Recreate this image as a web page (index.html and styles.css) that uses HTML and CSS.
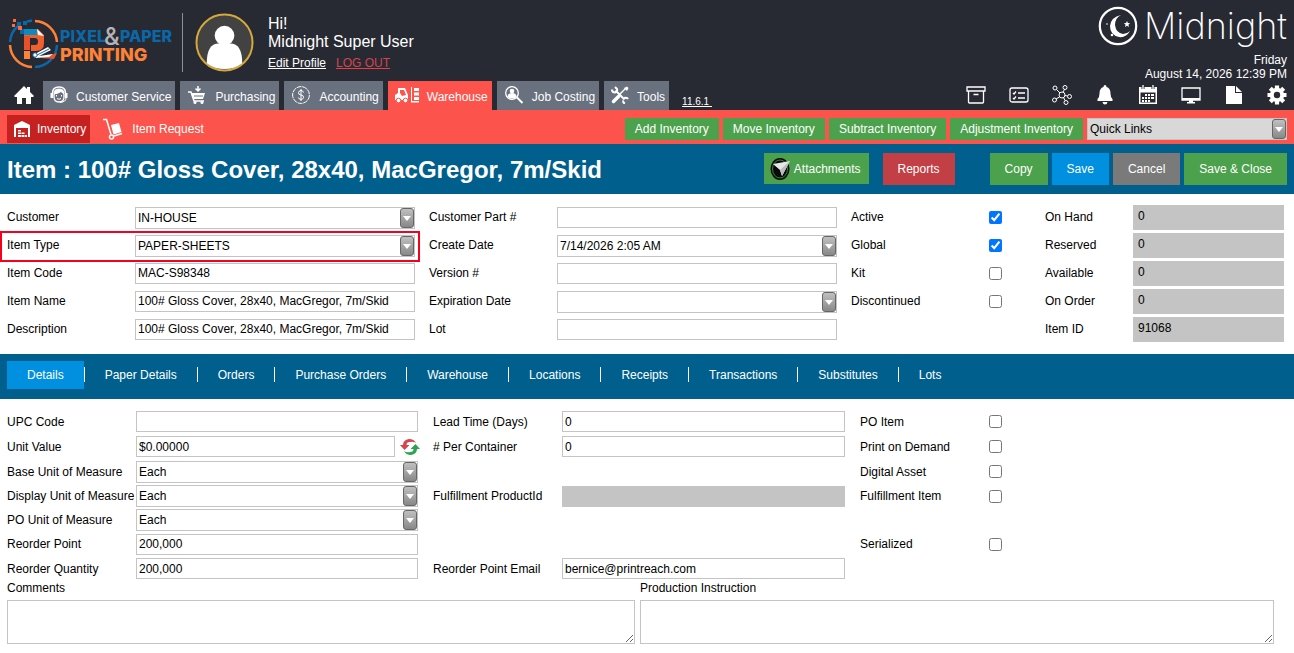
FILE: index.html
```
<!DOCTYPE html>
<html lang="en">
<head>
  <meta charset="UTF-8" />
  <meta name="viewport" content="width=device-width, initial-scale=1.0"/>
  <title>Midnight - Item</title>
  <link rel="stylesheet" href="styles.css">
</head>
<body>

  <!-- Header -->
  <header class="header">
    <div class="header-left">
      <div class="brand">
        <svg class="brand-logo" viewBox="0 0 166 54" role="img" aria-label="Pixel and Paper Printing">
          <g fill="none" stroke-width="2.500">
            <path d="M28 4A23 23 0 0 1 50 25" stroke="#ff8236"/>
            <path d="M50 28A23 23 0 0 1 28 50" stroke="#0a68a8"/>
            <path d="M25 50A23 23 0 0 1 3 28" stroke="#ff8236"/>
            <path d="M3 25A23 23 0 0 1 11 9" stroke="#0a68a8"/>
            <path d="M20 4.500l5-1" stroke="#0a68a8"/>
          </g>
          <path d="M10 5h4v4h-4zM16 4h4v4h-4zM13 12h4v5h-4z" fill="#0a68a8"/>
          <path d="M6 2h3v3h-3zM5 7h3v3h-3zM11 9h4v4h-4z" fill="#ff6a3a"/>
          <path d="M17 12h14l6 6v8q0 8-8 8h-5v-6h4q3 0 3-3.500t-3-3.500h-5v-1h-6z" fill="#f0602e"/>
          <path d="M17 12h13v6h-13z" fill="#0b8bc0"/>
          <path d="M17 19h6v14h-6z" fill="#e8502c"/>
          <path d="M17 34h6v8h-6z" fill="#ff8236"/>
          <path d="M30 12l7 7-6-1z" fill="#fff"/>
          <path d="M34 41l16-5-3 6z" fill="#e8502c"/>
          <path d="M26 38l15-8 3 3-12 6 14-2-4 3-13 1z" fill="#fff"/>
          <path d="M30 38l12-6" stroke="#0a68a8"/>
          <circle cx="28" cy="38" r="2.200" fill="#fff" stroke="#0a68a8"/>
          <g class="logo-words">
            <text x="53" y="25" class="logo-blue">PIXEL</text>
            <text x="113" y="25" class="logo-blue">PAPER</text>
            <text x="97" y="28" class="logo-amp">&amp;</text>
            <text x="53" y="44" class="logo-orange">PRINTING</text>
          </g>
        </svg>
        <div class="divider"></div>
        <svg class="avatar" viewBox="0 0 60 60" aria-hidden="true">
          <circle cx="30" cy="30" r="28.500" fill="#424242" stroke="#d6a93a" stroke-width="2"/>
          <circle cx="30" cy="23" r="10" fill="#fff"/>
          <path d="M12 51q0-20 12-20h12q12 0 12 20-8 6-18 6t-18-6z" fill="#fff"/>
        </svg>
        <div class="user">
          <div class="user-name">Hi!<br>Midnight Super User</div>
          <div class="user-links">
            <a href="#">Edit Profile</a>
            <a href="#" class="logout">LOG OUT</a>
          </div>
        </div>
      </div>

      <nav class="main-nav">
        <a href="#" class="home" aria-label="Home">
          <svg viewBox="0 0 20 18"><path d="M10 0l3 3v-2h3v5l4 4-1 1h-2v7h-5v-6h-4v6h-5v-7h-2l-1-1z" fill="#fff"/></svg>
        </a>
        <a href="#">
          <svg width="18" height="18" viewBox="0 0 18 18" fill="none" stroke="#fff">
            <path d="M2.500 7q0-6 6.500-6t6.500 6" stroke-width="1.500"/>
            <path d="M4 8q-.5-5 5-5t5 5l-3-2.500q-3 2-7 2.500z" fill="#fff"/>
            <path d="M4 8v3q0 5 5 5t5-5v-3" stroke-width="1.300"/>
            <path d="M.500 7h2.500v5h-2.500zM15 7h2.500v5h-2.500z" fill="#fff" stroke="none"/>
            <path d="M16 12q0 4-6 4.500M7 12.500q2 1.500 4 0M6.500 9v1.500M11.500 9v1.500"/>
          </svg>
          Customer Service
        </a>
        <a href="#">
          <svg width="20" height="18" viewBox="0 0 20 18" fill="none" stroke="#fff" stroke-width="1.500">
            <path d="M1 6h3l3 9h10"/>
            <path d="M4 7h14l-2 6h-10z" fill="#fff" stroke="none"/>
            <path d="M7 10h9" stroke="#69717f" stroke-width="1"/>
            <path d="M11 0v4M8.500 2.500l2.500 2.500 2.500-2.500"/>
            <circle cx="8" cy="16.500" r="1.500" fill="#fff" stroke="none"/>
            <circle cx="15" cy="16.500" r="1.500" fill="#fff" stroke="none"/>
          </svg>
          Purchasing
        </a>
        <a href="#">
          <svg width="20" height="18" viewBox="0 0 20 18" fill="none" stroke="#fff">
            <circle cx="10" cy="9" r="8.400" stroke-dasharray="5 .8"/>
            <path d="M12.500 6.500q-.5-2-2.500-2t-2.500 2 2.500 2.500 2.500 2.500-2.500 2-2.500-2M10 3v12"/>
          </svg>
          Accounting
        </a>
        <a href="#" class="active">
          <svg width="24" height="18" viewBox="0 0 24 18">
            <path d="M0 9l3-2v-5h7l3 7v5h-13z" fill="#fff"/>
            <path d="M5 4h4l2 5-4 1-2-3z" fill="#fc544c"/>
            <circle cx="3.500" cy="14.500" r="2.300" fill="#fff" stroke="#fc544c"/>
            <circle cx="10.500" cy="14.500" r="2.300" fill="#fff" stroke="#fc544c"/>
            <path d="M16 1h1v14h7v1.500h-8zM19 2h5v3h-5zM19 6.500h5v3h-5zM19 11h5v3h-5z" fill="#fff"/>
          </svg>
          Warehouse
        </a>
        <a href="#">
          <svg width="20" height="18" viewBox="0 0 20 18" fill="none" stroke="#fff">
            <circle cx="8" cy="7" r="6.300" stroke-width="1.300"/>
            <circle cx="8" cy="5" r="2.300" fill="#fff" stroke="none"/>
            <path d="M3.500 11q0-4 4.500-4t4.500 4q-4 3-9 0z" fill="#fff" stroke="none"/>
            <path d="M13 11.500l5.500 5.500" stroke-width="2"/>
          </svg>
          Job Costing
        </a>
        <a href="#">
          <svg width="18" height="18" viewBox="0 0 18 18" fill="none" stroke="#fff">
            <path d="M4.500 4.500l9 9" stroke-width="2"/>
            <path d="M1 3.500q0 3 3 3 2.500-.5 2-3.500l-2-2M13 12q3-1 4 1M12.500 14.500q-1 2 1.500 3" stroke-width="2"/>
            <path d="M14.500 2.500l-6 6" stroke-width="1.500"/>
            <path d="M13 2l3-1.500 1.500 1.500-1.500 3z" fill="#fff" stroke="none"/>
            <path d="M7.500 10.500l-5 5" stroke-width="3.500" stroke-linecap="round"/>
          </svg>
          Tools
        </a>
        <a href="#" class="version">11.6.1&nbsp;</a>
      </nav>
    </div>

    <div class="header-right">
      <div class="product">
        <svg width="40" height="40" viewBox="0 0 40 40" aria-hidden="true">
          <circle cx="20" cy="20" r="18.200" fill="none" stroke="#fff" stroke-width="2.200"/>
          <path d="M23 9q-6 3-6 10 1 8 8 9 4 0 7-3-4 7-11 6-9-2-9-11 1-9 11-11z" fill="#fff"/>
          <path d="M29 15l.9 2 2.200.2-1.700 1.500.6 2.300-2-1.200-2 1.200.6-2.300-1.700-1.500 2.200-.2z" fill="#fff"/>
          <circle cx="9" cy="18" r=".8" fill="#fff"/>
          <circle cx="14" cy="29" r="1.300" fill="#fff"/>
        </svg>
        <span>Midnight</span>
      </div>
      <div class="date">Friday<br>August 14, 2026 12:39 PM</div>
      <div class="tools">
        <a href="#" aria-label="Archive">
          <svg viewBox="0 0 20 20" fill="none" stroke="#fff" stroke-width="1.300"><path d="M1 2h18v4h-18zM2.500 6v11q0 1 1 1h13q1 0 1-1v-11M7.500 9.500h5"/></svg>
        </a>
        <a href="#" aria-label="Checklist">
          <svg viewBox="0 0 20 20" fill="none" stroke="#fff" stroke-width="1.300"><rect x="1" y="3" width="18" height="14" rx="2"/><path d="M4 8l1 1 2-2.500M4 13l1 1 2-2.500M9 8h7M9 13h7"/></svg>
        </a>
        <a href="#" aria-label="Network">
          <svg viewBox="0 0 20 20" fill="none" stroke="#fff"><circle cx="10" cy="10" r="3"/><circle cx="3" cy="3" r="2"/><circle cx="13" cy="2.500" r="2"/><circle cx="17.500" cy="11.500" r="2"/><circle cx="14" cy="17.500" r="2"/><circle cx="2.500" cy="15" r="2"/><path d="M4.500 4.500l3.500 3.500M12.500 4.500l-1.500 2.500M13 10.500l2.500.5M11.500 12.500l1.500 3M7.500 12l-3.500 2"/></svg>
        </a>
        <a href="#" aria-label="Notifications">
          <svg viewBox="0 0 20 20" fill="#fff"><path d="M10 0q1.500 0 1.500 2 4 1 4 6.500 0 4 2 5.500v2h-15v-2q2-1.500 2-5.500 0-5.500 4-6.500 0-2 1.500-2zM7.500 17h5q-.5 2.500-2.500 2.500t-2.500-2.500z"/></svg>
        </a>
        <a href="#" aria-label="Calendar">
          <svg viewBox="0 0 20 20"><path d="M1 2h18v17h-18z" fill="#fff"/><path d="M2.500 7.500h15v10h-15z" fill="#282a33"/><path d="M7 9h2v2h-2zM10 9h2v2h-2zM13 9h3v2h-3zM4 12h2v2h-2zM7 12h2v2h-2zM10 12h2v2h-2zM13 12h3v2h-3zM4 15h2v2h-2zM7 15h2v2h-2zM10 15h2v2h-2z" fill="#fff"/><path d="M5 0v4M15 0v4" stroke="#282a33" stroke-width="3"/><path d="M5 0v4M15 0v4" stroke="#fff" stroke-width="1.300"/></svg>
        </a>
        <a href="#" aria-label="Monitor">
          <svg viewBox="0 0 20 20"><path d="M1 3h18v12h-18z" fill="none" stroke="#fff" stroke-width="1.300"/><path d="M1 13h18v2h-18zM8 15h4v2h2v1.500h-8v-1.500h2z" fill="#fff"/></svg>
        </a>
        <a href="#" aria-label="Document">
          <svg viewBox="0 0 20 20" fill="#fff"><path d="M2 1h9v7h7v11h-16zM12 1l6 6h-6z"/></svg>
        </a>
        <a href="#" aria-label="Settings">
          <svg viewBox="0 0 20 20"><circle cx="10" cy="10" r="5.200" fill="none" stroke="#fff" stroke-width="4"/><path d="M10 .500v4M10 15.500v4M.500 10h4M15.500 10h4M3.300 3.300l2.700 2.700M14 14l2.700 2.700M3.300 16.700l2.700-2.700M14 6l2.700-2.700" stroke="#fff" stroke-width="4.200"/></svg>
        </a>
      </div>
    </div>
  </header>

  <!-- Warehouse menu -->
  <div class="sub-bar">
    <nav class="sub-nav">
      <a href="#" class="active">
        <svg width="16" height="16" viewBox="0 0 16 16"><path d="M0 4l8-4 8 4v12h-2v-9h-12v9h-2z" fill="#fff"/><path d="M4 9h3v1.500h-3zM4 11.500h3v1.500h-3zM4 14h3v2h-3zM7.500 11.500h3v1.500h-3zM7.500 14h3v2h-3zM11 14h2v2h-2z" fill="#fff"/></svg>
        Inventory
      </a>
      <a href="#" class="plain">
        <svg width="20" height="22" viewBox="0 0 20 22"><path d="M0 1.500h3.500l4.500 15" fill="none" stroke="#fff" stroke-width="1.500"/><path d="M8 7l8-2 2.500 9-8 2.500z" fill="#fff"/><path d="M11 18l8-2.500" stroke="#fff" stroke-width="1.500"/><circle cx="8.500" cy="19" r="2" fill="none" stroke="#fff" stroke-width="1.500"/></svg>
        Item Request
      </a>
    </nav>
    <div class="sub-actions">
      <button>Add Inventory</button>
      <button>Move Inventory</button>
      <button>Subtract Inventory</button>
      <button>Adjustment Inventory</button>
      <div class="combo quick-links">
        <select aria-label="Quick Links"><option>Quick Links</option></select>
      </div>
    </div>
  </div>

  <!-- Title -->
  <div class="title-bar">
    <h1>Item : 100# Gloss Cover, 28x40, MacGregor, 7m/Skid</h1>
    <div class="title-actions">
      <button class="btn attachments">
        <svg width="20" height="24" viewBox="0 0 20 24" aria-hidden="true"><ellipse cx="10" cy="12" rx="9.500" ry="11" fill="#0a0a0a"/><ellipse cx="10" cy="12" rx="7.500" ry="9" fill="none" stroke="#4ca14c" stroke-width=".8"/><path d="M3 7l17-3-8 15-2-6z" fill="#e6e6e6"/><path d="M10 13l10-9-8 15z" fill="#bbb"/></svg>
        Attachments
      </button>
      <button class="btn red">Reports</button>
      <div class="save-group">
        <button class="btn">Copy</button>
        <button class="btn blue">Save</button>
        <button class="btn gray">Cancel</button>
        <button class="btn">Save &amp; Close</button>
      </div>
    </div>
  </div>

  <!-- Item form -->
  <form class="item-form">
    <div class="col">
      <div class="row">
        <label for="customer">Customer</label>
        <div class="combo"><select id="customer"><option>IN-HOUSE</option></select></div>
      </div>
      <div class="row highlight">
        <label for="item-type">Item Type</label>
        <div class="combo"><select id="item-type"><option>PAPER-SHEETS</option></select></div>
      </div>
      <div class="row">
        <label for="item-code">Item Code</label>
        <input type="text" id="item-code" value="MAC-S98348">
      </div>
      <div class="row">
        <label for="item-name">Item Name</label>
        <input type="text" id="item-name" value="100# Gloss Cover, 28x40, MacGregor, 7m/Skid">
      </div>
      <div class="row">
        <label for="description">Description</label>
        <input type="text" id="description" value="100# Gloss Cover, 28x40, MacGregor, 7m/Skid">
      </div>
    </div>

    <div class="col">
      <div class="row">
        <label for="customer-part">Customer Part #</label>
        <input type="text" id="customer-part">
      </div>
      <div class="row">
        <label for="create-date">Create Date</label>
        <div class="combo"><input type="text" id="create-date" value="7/14/2026 2:05 AM"></div>
      </div>
      <div class="row">
        <label for="version">Version #</label>
        <input type="text" id="version">
      </div>
      <div class="row">
        <label for="expiration-date">Expiration Date</label>
        <div class="combo"><input type="text" id="expiration-date"></div>
      </div>
      <div class="row">
        <label for="lot">Lot</label>
        <input type="text" id="lot">
      </div>
    </div>

    <div class="col checks">
      <div class="row"><label for="active">Active</label><input type="checkbox" id="active" checked></div>
      <div class="row"><label for="global">Global</label><input type="checkbox" id="global" checked></div>
      <div class="row"><label for="kit">Kit</label><input type="checkbox" id="kit"></div>
      <div class="row"><label for="discontinued">Discontinued</label><input type="checkbox" id="discontinued"></div>
    </div>

    <div class="col totals">
      <div class="row"><label for="on-hand">On Hand</label><output id="on-hand">0</output></div>
      <div class="row"><label for="reserved">Reserved</label><output id="reserved">0</output></div>
      <div class="row"><label for="available">Available</label><output id="available">0</output></div>
      <div class="row"><label for="on-order">On Order</label><output id="on-order">0</output></div>
      <div class="row"><label for="item-id">Item ID</label><output id="item-id">91068</output></div>
    </div>
  </form>

  <!-- Tabs -->
  <nav class="tabs">
    <a href="#" class="active">Details</a>
    <a href="#">Paper Details</a>
    <a href="#">Orders</a>
    <a href="#">Purchase Orders</a>
    <a href="#">Warehouse</a>
    <a href="#">Locations</a>
    <a href="#">Receipts</a>
    <a href="#">Transactions</a>
    <a href="#">Substitutes</a>
    <a href="#">Lots</a>
  </nav>

  <!-- Details tab -->
  <form class="details-form">
    <div class="col">
      <div class="row">
        <label for="upc">UPC Code</label>
        <input type="text" id="upc">
      </div>
      <div class="row">
        <label for="unit-value">Unit Value</label>
        <div class="with-icon">
          <input type="text" id="unit-value" value="$0.00000">
          <button type="button" class="refresh" aria-label="Refresh unit value">
            <svg width="20" height="16" viewBox="0 0 20 16"><path d="M16 4q-2-4-7-4-6 1-6 6h-3l4.500 5 5-5h-3q0-3 3-3 4-1 6.500 1z" fill="#d8434c"/><path d="M4 12q2 4 7 4 6-1 6-6h3l-4.500-5-5 5h3q0 3-3 3-4 1-6.500-1z" fill="#2fa152"/></svg>
          </button>
        </div>
      </div>
      <div class="row">
        <label for="base-unit">Base Unit of Measure</label>
        <div class="combo"><select id="base-unit"><option>Each</option></select></div>
      </div>
      <div class="row">
        <label for="display-unit">Display Unit of Measure</label>
        <div class="combo"><select id="display-unit"><option>Each</option></select></div>
      </div>
      <div class="row">
        <label for="po-unit">PO Unit of Measure</label>
        <div class="combo"><select id="po-unit"><option>Each</option></select></div>
      </div>
      <div class="row">
        <label for="reorder-point">Reorder Point</label>
        <input type="text" id="reorder-point" value="200,000">
      </div>
      <div class="row">
        <label for="reorder-quantity">Reorder Quantity</label>
        <input type="text" id="reorder-quantity" value="200,000">
      </div>
    </div>

    <div class="col">
      <div class="row">
        <label for="lead-time">Lead Time (Days)</label>
        <input type="text" id="lead-time" value="0">
      </div>
      <div class="row">
        <label for="per-container"># Per Container</label>
        <input type="text" id="per-container" value="0">
      </div>
      <div class="row"></div>
      <div class="row">
        <label for="fulfillment-id">Fulfillment ProductId</label>
        <input type="text" id="fulfillment-id" disabled>
      </div>
      <div class="row"></div>
      <div class="row"></div>
      <div class="row">
        <label for="reorder-email">Reorder Point Email</label>
        <input type="text" id="reorder-email" value="bernice@printreach.com">
      </div>
    </div>

    <div class="col">
      <div class="row"><label for="po-item">PO Item</label><input type="checkbox" id="po-item"></div>
      <div class="row"><label for="print-on-demand">Print on Demand</label><input type="checkbox" id="print-on-demand"></div>
      <div class="row"><label for="digital-asset">Digital Asset</label><input type="checkbox" id="digital-asset"></div>
      <div class="row"><label for="fulfillment-item">Fulfillment Item</label><input type="checkbox" id="fulfillment-item"></div>
      <div class="row"></div>
      <div class="row"><label for="serialized">Serialized</label><input type="checkbox" id="serialized"></div>
    </div>
  </form>

  <div class="notes">
    <div>
      <label for="comments">Comments</label>
      <textarea id="comments"></textarea>
    </div>
    <div>
      <label for="production">Production Instruction</label>
      <textarea id="production"></textarea>
    </div>
  </div>

</body>
</html>
```
FILE: styles.css
```
:root {
  --dark: #282a33;
  --slate: #69717f;
  --coral: #fc544c;
  --crimson: #c52121;
  --navy: #005f8c;
  --blue: #0090df;
  --green: #4ca14c;
  --red: #c23f46;
  --gray: #7a7a7a;
  --line: #c4c4c4;
}

*,
*::before,
*::after {
  box-sizing: border-box;
}

body {
  margin: 0;
  background-color: #fff;
  color: #000;
  font-family: "Liberation Sans", Arial, sans-serif;
  font-size: 12px;
  line-height: 14px;
}

a {
  color: #fff;
  text-decoration: none;
}

button,
input,
select,
textarea {
  font-family: inherit;
  font-size: 12px;
}

button {
  border: none;
  color: #fff;
  background-color: var(--green);
  cursor: pointer;
}

svg {
  display: block;
  flex: none;
}

/* Header */
.header {
  display: flex;
  justify-content: space-between;
  padding: 0 7px;
  background-color: var(--dark);
  color: #fff;
}

.brand {
  display: flex;
  align-items: flex-start;
  padding: 13px 0 9px;
}

.brand-logo {
  width: 166px;
  height: 54px;
  margin-top: 4px;
}

.logo-words {
  font-family: Inter, sans-serif;
  font-weight: 800;
  font-size: 16px;
}

.logo-blue {
  fill: #0a68a8;
}

.logo-amp {
  fill: #b4b4b8;
  font-weight: 500;
  font-size: 24px;
}

.logo-orange {
  fill: #ff8236;
  font-size: 18px;
}

.divider {
  width: 1px;
  height: 59px;
  margin: 0 12px 0 9px;
  background-color: #8d8f96;
}

.avatar {
  width: 59px;
  height: 59px;
}

.user {
  margin: 2px 0 0 14px;
}

.user-name {
  font-size: 16px;
  line-height: 18px;
}

.user-links {
  display: flex;
  gap: 10px;
  margin-top: 5px;
}

.user-links a {
  text-decoration: underline;
}

.user-links .logout {
  color: #d8434c;
}

.main-nav {
  display: flex;
  gap: 5px;
}

.main-nav a {
  display: flex;
  align-items: center;
  gap: 8px;
  height: 29px;
  padding: 2px 4px 0 7px;
  background-color: var(--slate);
  white-space: nowrap;
}

.main-nav a svg {
  margin-top: -4px;
}

.main-nav a.active {
  background-color: var(--coral);
}

.main-nav a.home {
  width: 31px;
  background: none;
}

.main-nav a.home svg {
  width: 20px;
  height: 18px;
}

.main-nav a.version {
  align-items: flex-end;
  padding: 0 0 1px 8px;
  background: none;
  font-size: 10px;
  text-decoration: underline;
}

.header-right {
  display: flex;
  flex-direction: column;
  align-items: flex-end;
  padding-top: 6px;
}

.product {
  display: flex;
  align-items: center;
  gap: 6px;
  height: 40px;
  font-family: Inter, sans-serif;
  font-weight: 200;
  font-size: 36px;
  line-height: 40px;
}

.date {
  margin-top: 7px;
  text-align: right;
}

.tools {
  display: flex;
  gap: 23px;
  margin-top: 4px;
}

.tools svg {
  width: 20px;
  height: 20px;
}

/* Warehouse menu */
.sub-bar {
  display: flex;
  justify-content: space-between;
  height: 34px;
  padding: 0 7px;
  background-color: var(--coral);
}

.sub-nav,
.sub-actions {
  display: flex;
  align-items: center;
}

.sub-nav {
  gap: 6px;
  padding-top: 4px;
}

.sub-nav a {
  display: flex;
  align-items: center;
  gap: 7px;
  height: 28px;
  padding: 0 4px 0 7px;
}

.sub-nav a.active {
  background-color: var(--crimson);
}

.sub-nav a.plain {
  gap: 9px;
}

.sub-actions {
  gap: 4px;
  padding-top: 3px;
}

.sub-actions button {
  height: 22px;
  padding: 0 10px;
  white-space: nowrap;
}

.quick-links {
  width: 200px;
}

.quick-links select {
  background-color: #d8d8d8;
}

/* Title */
.title-bar {
  display: flex;
  justify-content: space-between;
  height: 50px;
  padding: 9px 7px;
  background-color: var(--navy);
  color: #fff;
}

.title-bar h1 {
  margin: 0;
  font-size: 24px;
  line-height: 34px;
}

.title-actions {
  display: flex;
  gap: 14px;
}

.save-group {
  display: flex;
  gap: 4px;
  margin-left: 21px;
}

.btn {
  height: 32px;
  padding: 0 15px;
  white-space: nowrap;
}

.btn.attachments {
  display: flex;
  align-items: center;
  gap: 4px;
  height: 31px;
  padding: 0 8px 0 6px;
}

.btn.red {
  background-color: var(--red);
}

.btn.blue {
  background-color: var(--blue);
}

.btn.gray {
  background-color: var(--gray);
}

/* Form rows */
.row {
  display: grid;
  grid-template-columns: 128px 1fr;
  align-items: center;
}

.row label {
  white-space: nowrap;
}

input[type="text"],
select {
  width: 100%;
  min-width: 0;
  height: 21px;
  padding: 0 2px;
  border: 1px solid var(--line);
  border-radius: 0;
  background-color: #fff;
  color: #000;
}

input[type="text"]:disabled {
  background-color: var(--line);
}

input[type="checkbox"] {
  width: 13px;
  height: 13px;
  margin: 0;
}

/* Combo box with its own arrow button */
.combo {
  position: relative;
}

.combo select,
.combo input[type="text"] {
  display: block;
  height: 22px;
  padding-right: 16px;
  appearance: none;
}

.combo::before {
  content: "";
  position: absolute;
  top: 1px;
  right: 1px;
  width: 14px;
  height: 20px;
  border: 1px solid #666;
  border-radius: 3px;
  background: linear-gradient(#c0c0c0, #888);
  pointer-events: none;
}

.combo::after {
  content: "";
  position: absolute;
  top: 9px;
  right: 4px;
  border: 4px solid transparent;
  border-top: 5px solid #fff;
  border-bottom: none;
  pointer-events: none;
}

/* Item form */
.item-form {
  display: grid;
  grid-template-columns: 408fr 408fr 180fr 239fr;
  column-gap: 14px;
  padding: 9px 10px 11px 7px;
}

.item-form .row {
  height: 28px;
}

.item-form .combo {
  margin-top: 2px;
}

.checks .row {
  grid-template-columns: 138px 1fr;
}

.totals .row {
  grid-template-columns: 88px 1fr;
}

.totals output {
  height: 25px;
  padding: 4px 5px;
  background-color: var(--line);
}

.highlight {
  position: relative;
}

.highlight::after {
  content: "";
  position: absolute;
  inset: 0 -5px -3px -7px;
  border: 2px solid #f5001d;
  pointer-events: none;
}

/* Tabs */
.tabs {
  display: flex;
  align-items: center;
  height: 45px;
  padding: 0 7px 3px;
  background-color: var(--navy);
}

.tabs a {
  position: relative;
  padding: 7px 20px;
  margin-right: 1px;
  white-space: nowrap;
}

.tabs a.active {
  background-color: var(--blue);
}

.tabs a:not(:last-child)::after {
  content: "";
  position: absolute;
  top: 6px;
  right: -1px;
  width: 1px;
  height: 15px;
  background-color: #fff;
}

/* Details tab */
.details-form {
  display: grid;
  grid-template-columns: 411fr 412fr 427fr;
  column-gap: 15px;
  padding: 10px 7px 0;
}

.details-form .col {
  display: grid;
  grid-template-rows: 25px 25px 25px 24px 24px 24px 25px;
}

.details-form .row {
  grid-template-columns: 129px 1fr;
}

.with-icon {
  display: flex;
  align-items: center;
  gap: 5px;
}

.refresh {
  width: 18px;
  padding: 0;
  background: none;
}

/* Notes */
.notes {
  display: grid;
  grid-template-columns: 628fr 634fr;
  gap: 5px;
  padding: 0 20px 9px 7px;
}

.notes label {
  display: block;
}

.notes textarea {
  display: block;
  width: 100%;
  height: 44px;
  margin-top: 5px;
  border: 1px solid var(--line);
}
```
